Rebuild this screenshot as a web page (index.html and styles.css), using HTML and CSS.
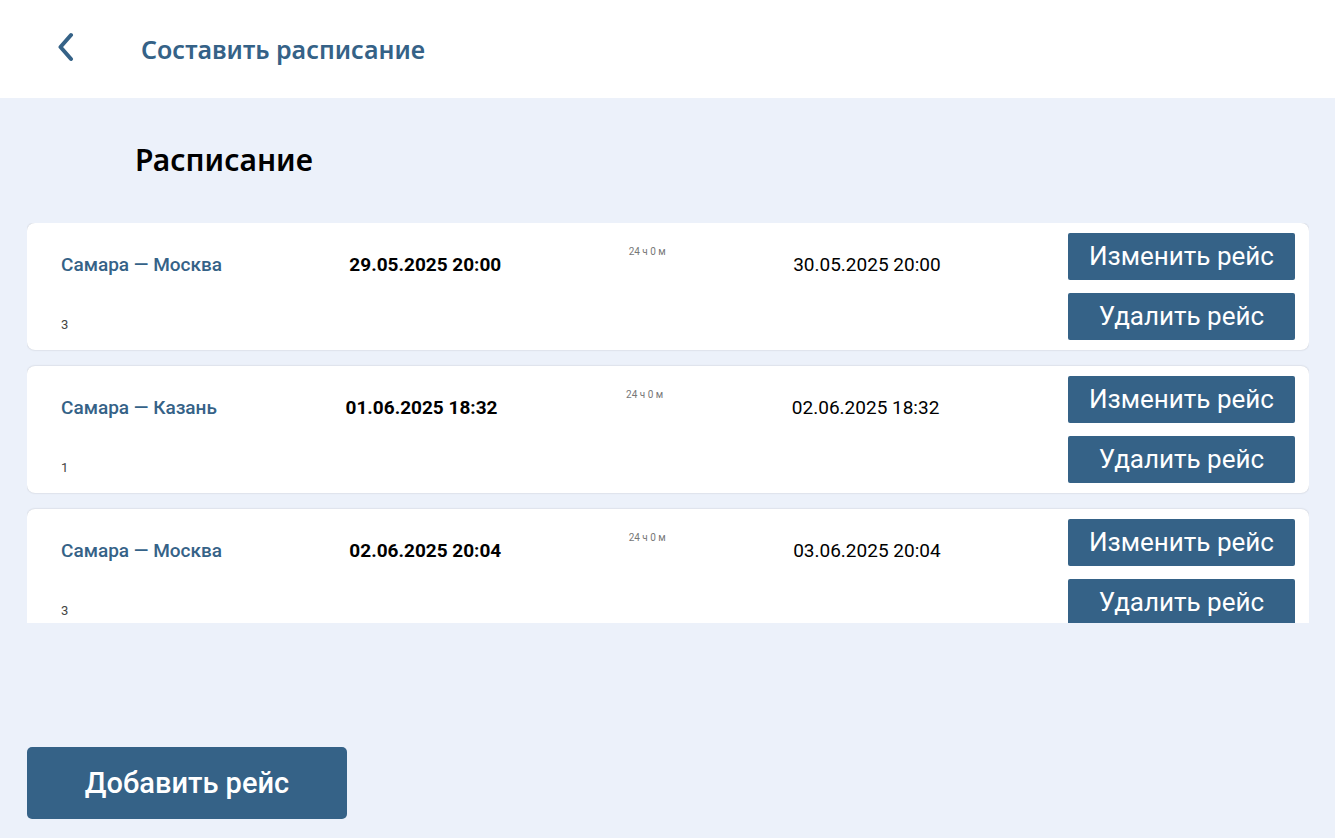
FILE: index.html
```html
<!DOCTYPE html>
<html lang="ru">
<head>
  <meta charset="utf-8">
  <meta name="viewport" content="width=device-width, initial-scale=1">
  <title>Составить расписание</title>
  <link rel="stylesheet" href="styles.css">
</head>
<body>
  <header class="topbar">
    <button class="back" type="button" aria-label="Назад">
      <svg class="back-icon" viewBox="0 0 16 30" width="16" height="30" aria-hidden="true"><path d="M13 3 2.500 15 13 27"/></svg>
    </button>
    <h1 class="topbar-title">Составить расписание</h1>
  </header>
  <main class="content">
    <h2 class="heading">Расписание</h2>
    <ul class="trips">
      <li class="trip">
        <div class="trip-info"><span class="route">Самара — Москва</span><span class="number">3</span></div>
        <time class="departure">29.05.2025 20:00</time>
        <span class="duration">24 ч 0 м</span>
        <time class="arrival">30.05.2025 20:00</time>
        <div class="actions"><button class="action" type="button">Изменить рейс</button><button class="action" type="button">Удалить рейс</button></div>
      </li>
      <li class="trip">
        <div class="trip-info"><span class="route">Самара — Казань</span><span class="number">1</span></div>
        <time class="departure">01.06.2025 18:32</time>
        <span class="duration">24 ч 0 м</span>
        <time class="arrival">02.06.2025 18:32</time>
        <div class="actions"><button class="action" type="button">Изменить рейс</button><button class="action" type="button">Удалить рейс</button></div>
      </li>
      <li class="trip">
        <div class="trip-info"><span class="route">Самара — Москва</span><span class="number">3</span></div>
        <time class="departure">02.06.2025 20:04</time>
        <span class="duration">24 ч 0 м</span>
        <time class="arrival">03.06.2025 20:04</time>
        <div class="actions"><button class="action" type="button">Изменить рейс</button><button class="action" type="button">Удалить рейс</button></div>
      </li>
    </ul>
    <button class="add" type="button">Добавить рейс</button>
  </main>
</body>
</html>
```

FILE: styles.css
```css
* { box-sizing: border-box; }

body {
  margin: 0;
  min-height: 100vh;
  display: flex;
  flex-direction: column;
  background: #ecf1fa;
  color: #000;
  font-family: Roboto, sans-serif;
}

button {
  border: 0;
  background: #356287;
  color: #fff;
  font-family: inherit;
  cursor: pointer;
}

.topbar {
  display: flex;
  align-items: center;
  gap: 57px;
  padding: 24px 48px;
  background: #fff;
}

.back {
  display: flex;
  padding: 8px 10px 12px;
  background: none;
}

.back-icon {
  fill: none;
  stroke: #356287;
  stroke-width: 4;
  stroke-linecap: round;
  stroke-linejoin: round;
}

.topbar-title {
  margin: 0;
  color: #356287;
  font: 600 25px/48px "Noto Sans", sans-serif;
}

.content {
  flex: 1;
  display: flex;
  flex-direction: column;
  align-items: flex-start;
  padding: 40px 26px 19px 27px;
}

.heading {
  margin: 0 0 41px;
  padding-left: 108px;
  font: 600 30px/44px "Noto Sans", sans-serif;
}

.trips {
  align-self: stretch;
  display: flex;
  flex-direction: column;
  gap: 16px;
  height: 400px;
  margin: 0;
  padding: 0;
  overflow-y: auto;
  scrollbar-width: none;
  list-style: none;
}

.trip {
  flex: none;
  display: flex;
  justify-content: space-between;
  align-items: flex-start;
  padding: 10px 14px 10px 34px;
  border-radius: 8px;
  background: #fff;
  box-shadow: 0 0 2px rgba(0, 0, 0, 0.2);
}

.trip-info {
  display: flex;
  flex-direction: column;
  gap: 38px;
  padding-top: 20px;
}

.route {
  color: #356287;
  font-size: 19px;
  font-weight: 500;
  line-height: 24px;
}

.number {
  color: #444;
  font-size: 13px;
  line-height: 20px;
}

.departure,
.arrival {
  padding-top: 20px;
  font-size: 19px;
  line-height: 24px;
}

.departure { font-weight: 700; }

.duration {
  padding-top: 13px;
  color: #777;
  font-size: 10px;
  line-height: 12px;
}

.actions {
  display: flex;
  flex-direction: column;
  gap: 13px;
}

.action {
  width: 227px;
  height: 47px;
  padding: 0 0 2px;
  border-radius: 2px;
  font-size: 26px;
}

.add {
  width: 320px;
  height: 72px;
  margin-top: auto;
  border-radius: 5px;
  font-size: 29px;
  font-weight: 500;
}
```
